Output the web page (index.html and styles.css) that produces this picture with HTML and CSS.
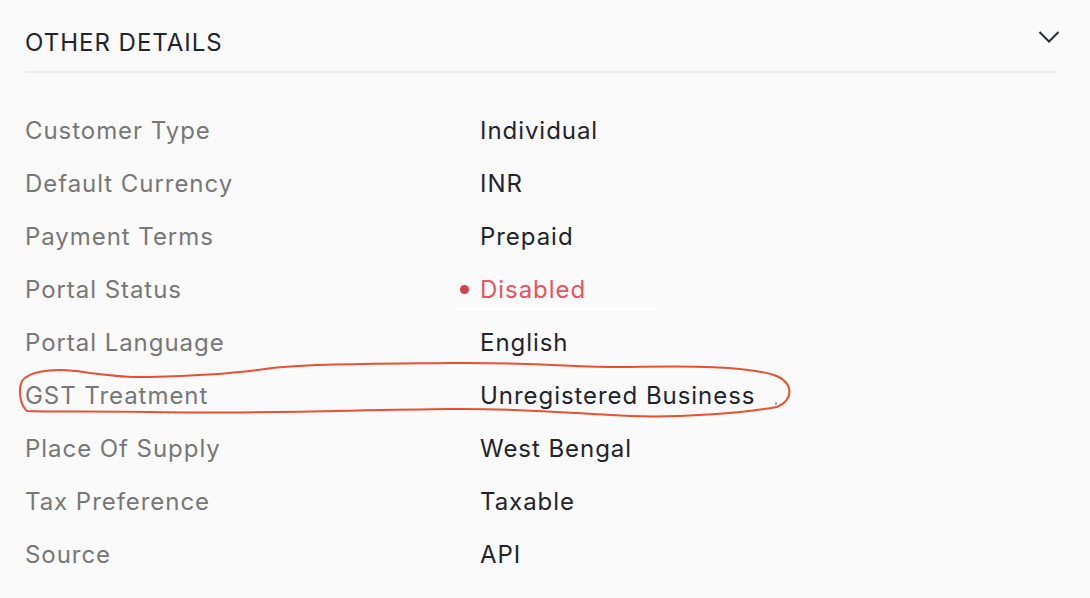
FILE: index.html
```html
<!DOCTYPE html>
<html lang="en">
<head>
<meta charset="utf-8">
<title>Other Details</title>
<link rel="stylesheet" href="styles.css">
</head>
<body>
<div class="page">
  <div class="section-head">
    <h2 class="section-title">OTHER DETAILS</h2>
    <svg class="chevron" width="22" height="14" viewBox="0 0 22 14"><path d="M1.5 2 L11 11.5 L20.5 2" fill="none" stroke="#2a2c33" stroke-width="2"/></svg>
  </div>
  <div class="details">
    <div class="row"><span class="label">Customer Type</span><span class="value">Individual</span></div>
    <div class="row"><span class="label">Default Currency</span><span class="value">INR</span></div>
    <div class="row"><span class="label">Payment Terms</span><span class="value">Prepaid</span></div>
    <div class="row"><span class="label">Portal Status</span><span class="value status"><span class="dot"></span>Disabled</span></div>
    <div class="row"><span class="label">Portal Language</span><span class="value">English</span></div>
    <div class="row"><span class="label">GST Treatment</span><span class="value">Unregistered Business</span></div>
    <div class="row"><span class="label">Place Of Supply</span><span class="value">West Bengal</span></div>
    <div class="row"><span class="label">Tax Preference</span><span class="value">Taxable</span></div>
    <div class="row"><span class="label">Source</span><span class="value">API</span></div>
  </div>
  <svg class="annotation" width="1090" height="598" viewBox="0 0 1090 598">
    <path d="M 27 411 C 20 405, 18 390, 22 381 C 28 372, 50 368, 75 371 C 100 374, 120 378, 150 377 C 190 376, 230 374, 265 369 C 300 364, 360 364, 450 363 C 540 362, 580 368, 630 367 C 690 366, 745 366, 774 375 C 795 383, 793 400, 777 407 C 740 413, 680 418, 630 416 C 580 414, 520 408, 450 409 C 350 410, 250 414, 150 412 C 90 411, 50 412, 27 411 Z" fill="none" stroke="#ea5030" stroke-width="2" stroke-linejoin="round"/>
    <path d="M 776 402 L 776 405" stroke="#555" stroke-width="1"/>
  </svg>
</div>
</body>
</html>
```

FILE: styles.css
```css
* { box-sizing: border-box; }
html, body {
  margin: 0;
  padding: 0;
  background: #fafafa;
}
body {
  font-family: Inter, "Noto Sans", "Liberation Sans", sans-serif;
  width: 1090px;
  height: 598px;
  overflow: hidden;
}
.page {
  position: relative;
  padding: 0 34px 0 25px;
  height: 598px;
}
.section-head {
  display: flex;
  align-items: center;
  justify-content: space-between;
  height: 73px;
  border-bottom: 2px solid #ededed;
  padding-top: 14px;
}
.section-title {
  margin: 0;
  font-size: 24px;
  font-weight: 400;
  color: #22242b;
  letter-spacing: 1px;
}
.chevron {
  margin-right: -4px;
  margin-top: -12px;
}
.details {
  padding-top: 31px;
}
.row {
  display: grid;
  grid-template-columns: 455px 1fr;
  height: 53px;
  align-items: center;
  font-size: 24px;
  letter-spacing: 0.95px;
}
.label {
  color: #777777;
}
.value {
  color: #22242b;
}
.status {
  position: relative;
  color: #e4555f;
  display: flex;
  align-items: center;
  margin-left: -20px;
}
.status::after {
  content: "";
  position: absolute;
  left: -3px;
  width: 203px;
  top: 33px;
  height: 2px;
  background: #ffffff;
}
.dot {
  width: 9px;
  height: 9px;
  border-radius: 50%;
  background: #d4404b;
  margin-right: 11px;
}
.annotation {
  position: absolute;
  left: 0;
  top: 0;
  pointer-events: none;
}
```
